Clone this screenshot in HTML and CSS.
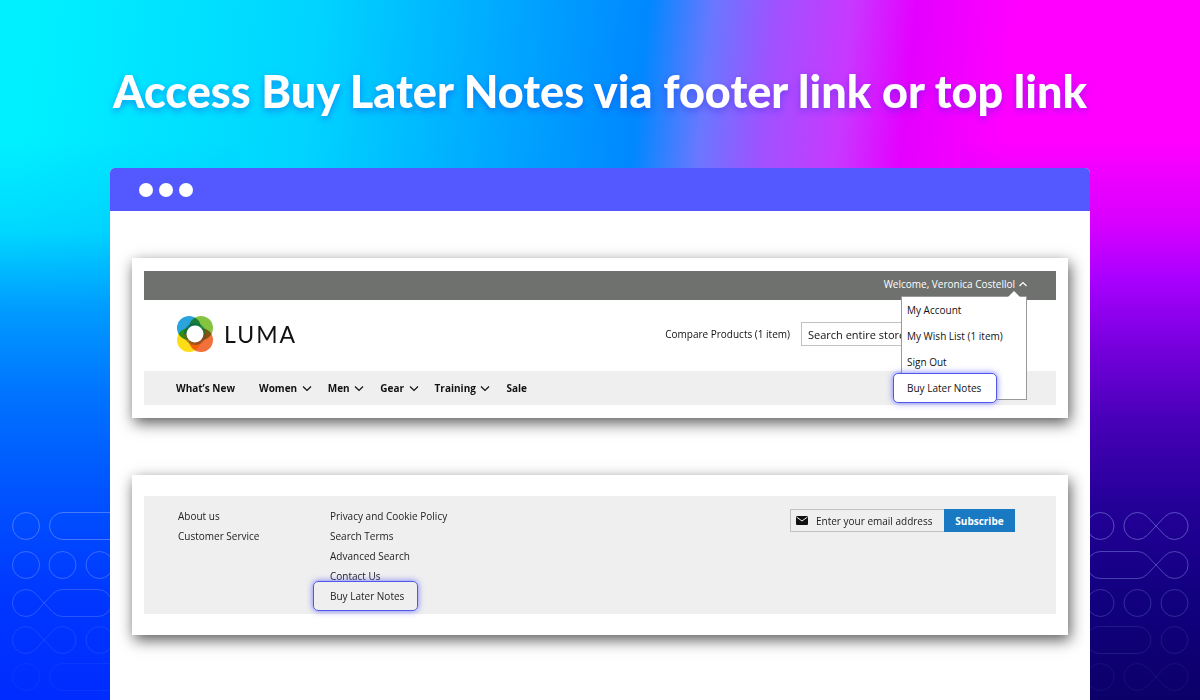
FILE: index.html
```html
<!DOCTYPE html>
<html lang="en">
<head>
  <meta charset="UTF-8" />
  <meta name="viewport" content="width=device-width, initial-scale=1" />
  <title>Buy Later Notes</title>
  <link rel="stylesheet" href="styles.css">
</head>
<body>
  <svg class="pattern pattern-left" width="110" height="195" viewBox="0 0 110 195" aria-hidden="true">
    <g opacity=".45"><circle cx="26" cy="21" r="13.5"/><rect x="49.5" y="7.5" width="100" height="27" rx="13.5"/></g>
    <g opacity=".38"><circle cx="26" cy="60" r="13.5"/><circle cx="62.5" cy="60" r="13.5"/><circle cx="99.5" cy="60" r="13.5"/></g>
    <g opacity=".28"><path d="M98 84.500H62.500Q57 84.500 53 88.500L35.500 107.500A13.500 13.500 0 1 1 35.500 88.500L53 107.500Q57 111.500 62.500 111.500H98A13.500 13.500 0 0 0 98 84.500"/></g>
    <g opacity=".15"><path d="M35.500 125.500A13.500 13.500 0 1 0 35.500 144.500L53 125.500A13.500 13.500 0 1 1 53 144.500Z"/><circle cx="99.5" cy="135" r="13.5"/></g>
    <g opacity=".07"><circle cx="26" cy="172" r="13.5"/><rect x="49.5" y="158.5" width="100" height="27" rx="13.5"/></g>
  </svg>
  <svg class="pattern pattern-right" width="110" height="195" viewBox="0 0 110 195" aria-hidden="true">
    <g opacity=".45"><circle cx="10.5" cy="21" r="13.5"/><path d="M57 11.500A13.500 13.500 0 1 0 57 30.500L75 11.500A13.500 13.500 0 1 1 75 30.500Z"/></g>
    <path opacity=".38" d="M10.500 46.500H47.500Q53 46.500 57 50.500L75 69.500A13.500 13.500 0 1 0 75 50.500L57 69.500Q53 73.500 47.500 73.500H10.500A13.500 13.500 0 0 1 10.500 46.500Z"/>
    <g opacity=".25"><circle cx="10.5" cy="98" r="13.5"/><circle cx="47.5" cy="98" r="13.5"/><circle cx="84.5" cy="98" r="13.5"/></g>
    <g opacity=".13"><rect x="-4" y="121.5" width="65" height="27" rx="13.5"/><circle cx="84.5" cy="135" r="13.5"/></g>
    <g opacity=".08"><circle cx="10.5" cy="172" r="13.5"/><path d="M57 162.500A13.500 13.500 0 1 0 57 181.500L75 162.500A13.500 13.500 0 1 1 75 181.500Z"/></g>
  </svg>

  <h1 class="title">Access Buy Later Notes via footer link or top link</h1>

  <main class="browser">
    <div class="browser-bar">
      <span class="dot"></span><span class="dot"></span><span class="dot"></span>
    </div>

    <div class="browser-body">
      <!-- Store header -->
      <section class="card">
        <div class="top-bar">
          <button class="welcome" type="button">Welcome, Veronica Costellol
            <svg width="8" height="6" viewBox="0 0 8 6"><path d="M.5 5 4 1.500 7.500 5" fill="none" stroke="#fff" stroke-width="1.200"/></svg>
          </button>
          <ul class="menu">
            <li><a href="#">My Account</a></li>
            <li><a href="#">My Wish List (1 item)</a></li>
            <li><a href="#">Sign Out</a></li>
            <li><a class="highlight" href="#">Buy Later Notes</a></li>
          </ul>
        </div>

        <div class="store-row">
          <a class="logo" href="#">
            <svg width="38" height="38" viewBox="0 0 38 38" aria-hidden="true">
              <g class="logo-rings">
                <circle cx="13" cy="13" r="12" fill="#2ba3dc"/>
                <circle cx="25" cy="13" r="12" fill="#84c441"/>
                <circle cx="13" cy="25" r="12" fill="#ffdd15"/>
                <circle cx="25" cy="25" r="12" fill="#f2703a"/>
              </g>
              <!-- darker ring where the four circles overlap -->
              <path d="M19 8A11 11 0 0 1 30 19H19Z" fill="#0d7a3c" fill-opacity=".7"/>
              <path d="M30 19A11 11 0 0 1 19 30V19Z" fill="#7d4420" fill-opacity=".7"/>
              <path d="M19 30A11 11 0 0 1 8 19H19Z" fill="#7d5a1c" fill-opacity=".7"/>
              <path d="M8 19A11 11 0 0 1 19 8V19Z" fill="#0b6650" fill-opacity=".7"/>
              <circle cx="19" cy="19" r="8.5" fill="#fff"/>
            </svg>
            <span>LUMA</span>
          </a>
          <div class="store-tools">
            <a href="#">Compare Products (1 item)</a>
            <input class="search" type="search" aria-label="Search" placeholder="Search entire store here...">
          </div>
        </div>

        <nav class="nav">
          <a href="#">What’s New</a>
          <a href="#">Women <svg width="10" height="6" viewBox="0 0 10 6"><path d="M1 .5 5 4.500 9 .5"/></svg></a>
          <a href="#">Men <svg width="10" height="6" viewBox="0 0 10 6"><path d="M1 .5 5 4.500 9 .5"/></svg></a>
          <a href="#">Gear <svg width="10" height="6" viewBox="0 0 10 6"><path d="M1 .5 5 4.500 9 .5"/></svg></a>
          <a href="#">Training <svg width="10" height="6" viewBox="0 0 10 6"><path d="M1 .5 5 4.500 9 .5"/></svg></a>
          <a href="#">Sale</a>
        </nav>
      </section>

      <!-- Store footer -->
      <section class="card card-footer">
        <footer class="footer">
          <ul class="links">
            <li><a href="#">About us</a></li>
            <li><a href="#">Customer Service</a></li>
          </ul>
          <ul class="links">
            <li><a href="#">Privacy and Cookie Policy</a></li>
            <li><a href="#">Search Terms</a></li>
            <li><a href="#">Advanced Search</a></li>
            <li><a href="#">Contact Us</a></li>
            <li><a class="highlight" href="#">Buy Later Notes</a></li>
          </ul>
          <form class="newsletter">
            <label class="email">
              <svg width="12" height="9" viewBox="0 0 12 9" role="img" aria-label="Email">
                <rect width="12" height="9" rx="1" fill="#111"/>
                <path d="M.5 1 6 5 11.500 1" fill="none" stroke="#efefef"/>
              </svg>
              <input type="email" placeholder="Enter your email address">
            </label>
            <button type="submit">Subscribe</button>
          </form>
        </footer>
      </section>
    </div>
  </main>
</body>
</html>
```
FILE: styles.css
```css
* {
  box-sizing: border-box;
}
body {
  margin: 0;
  min-height: 100vh;
  display: flex;
  flex-direction: column;
  position: relative;
  font-family: "Open Sans", sans-serif;
  font-size: 10px;
  color: #111;
  background:
    linear-gradient(to bottom, rgba(0,196,255,0) 20%, rgba(0,192,255,.5) 33%, #009cff 44%, #0074ff 56%, #0054ff 70%, #0036ff 86%, #002cff 100%) left / 20% 100% no-repeat,
    linear-gradient(to bottom, rgba(220,0,255,0) 20%, rgba(205,0,255,.8) 32%, #a800ff 40%, #7400dc 50%, #4800b8 60%, #240098 72%, #120080 85%, #0c0068 100%) right / 20% 100% no-repeat,
    linear-gradient(96deg, #00f0ff 3%, #00d4ff 25%, #00a8ff 40%, #0088ff 51%, #6878ff 56%, #a052ff 61%, #c838ff 67%, #e400ff 72%, #ff00ff 80%);
}
a {
  color: inherit;
  text-decoration: none;
}
ul {
  list-style: none;
  margin: 0;
  padding: 0;
}
input, button {
  font-family: inherit;
  font-size: inherit;
  color: inherit;
}
input::placeholder {
  color: inherit;
  opacity: 1;
}

/* Outline shapes in the bottom corners */
.pattern {
  position: absolute;
  bottom: 0;
  fill: none;
  stroke: #9cb0ff;
}
.pattern-left {
  left: 0;
}
.pattern-right {
  right: 0;
}

.title {
  margin: 0;
  padding: 63px 16px 49px;
  font-family: Lato, sans-serif;
  font-weight: 900;
  font-size: 45px;
  line-height: 56px;
  text-align: center;
  color: #fff;
  text-shadow: 0 3px 7px rgba(40, 40, 220, .4);
}

/* Browser frame */
.browser {
  flex: 1;
  position: relative;
  margin: 0 110px;
  background: #fff;
  border-radius: 5px 5px 0 0;
}
.browser-bar {
  display: flex;
  align-items: center;
  gap: 6px;
  height: 43px;
  padding: 0 29px;
  background: #5458ff;
  border-radius: 5px 5px 0 0;
}
.dot {
  width: 14px;
  height: 14px;
  border-radius: 50%;
  background: #fff;
}
.browser-body {
  display: flex;
  flex-direction: column;
  gap: 57px;
  padding: 47px 22px 64px;
}
.card {
  padding: 13px 12px;
  background: #fff;
  box-shadow: 2px 5px 14px rgba(0, 0, 0, .65);
}
.card-footer {
  padding: 21px 12px;
}

/* Store header */
.top-bar {
  position: relative;
  display: flex;
  justify-content: flex-end;
  align-items: center;
  height: 29px;
  padding: 0 29px 3px;
  background: #6e716e;
}
.welcome {
  display: flex;
  align-items: center;
  gap: 4px;
  padding: 0;
  border: 0;
  background: none;
  color: #fff;
}
.menu {
  position: absolute;
  top: 25px;
  right: 29px;
  z-index: 1;
  width: 126px;
  height: 104px;
  border: 1px solid #999;
  background: #fff;
}
.menu::before {
  content: "";
  position: absolute;
  top: -6px;
  right: 6px;
  border: 6px solid transparent;
  border-top: 0;
  border-bottom-color: #fff;
}
.menu li {
  display: flex;
  align-items: center;
  height: 26px;
  padding-left: 5px;
}
.highlight {
  display: block;
  margin-left: -14px;
  padding: 0 15px 0 13px;
  line-height: 28px;
  border: 1px solid #5458e8;
  border-radius: 5px;
  box-shadow: 0 0 6px rgba(84, 88, 255, .8);
}
.menu .highlight {
  background: #fff;
}
.store-row {
  display: flex;
  align-items: center;
  justify-content: space-between;
  height: 71px;
  padding: 0 30px 3px 32px;
}
.logo {
  display: flex;
  align-items: center;
  gap: 10px;
  font-family: Lato, sans-serif;
  font-size: 23px;
  letter-spacing: 2px;
}
.logo-rings circle {
  mix-blend-mode: multiply;
}
.store-tools {
  display: flex;
  align-items: center;
  gap: 11px;
}
.search {
  width: 225px;
  height: 24px;
  padding: 0 6px;
  border: 1px solid #c2c2c2;
  background: #fff;
  font-size: 11px;
}
.nav {
  display: flex;
  align-items: center;
  gap: 16px;
  height: 34px;
  padding: 0 32px;
  background: #efefef;
  font-weight: 700;
}
.nav a:first-child {
  margin-right: 8px;
}
.nav svg {
  margin-left: 2px;
  fill: none;
  stroke: #111;
  stroke-width: 1.2;
}

/* Store footer */
.footer {
  display: flex;
  align-items: flex-start;
  height: 118px;
  padding: 10px 41px 0 34px;
  background: #efefef;
  color: #222;
}
.links {
  width: 152px;
}
.links li {
  display: flex;
  align-items: center;
  height: 20px;
}
.links .highlight {
  margin-left: -17px;
  padding: 0 13px 0 16px;
}
.newsletter {
  display: flex;
  height: 23px;
  margin: 3px 0 0 auto;
}
.email {
  display: flex;
  align-items: center;
  gap: 8px;
  width: 154px;
  padding-left: 5px;
  border: 1px solid #c2c2c2;
  border-right: 0;
}
.email input {
  flex: 1;
  min-width: 0;
  padding: 0;
  border: 0;
  background: none;
}
.newsletter button {
  width: 71px;
  border: 0;
  background: #1979c3;
  color: #fff;
  font-weight: 700;
}
```
